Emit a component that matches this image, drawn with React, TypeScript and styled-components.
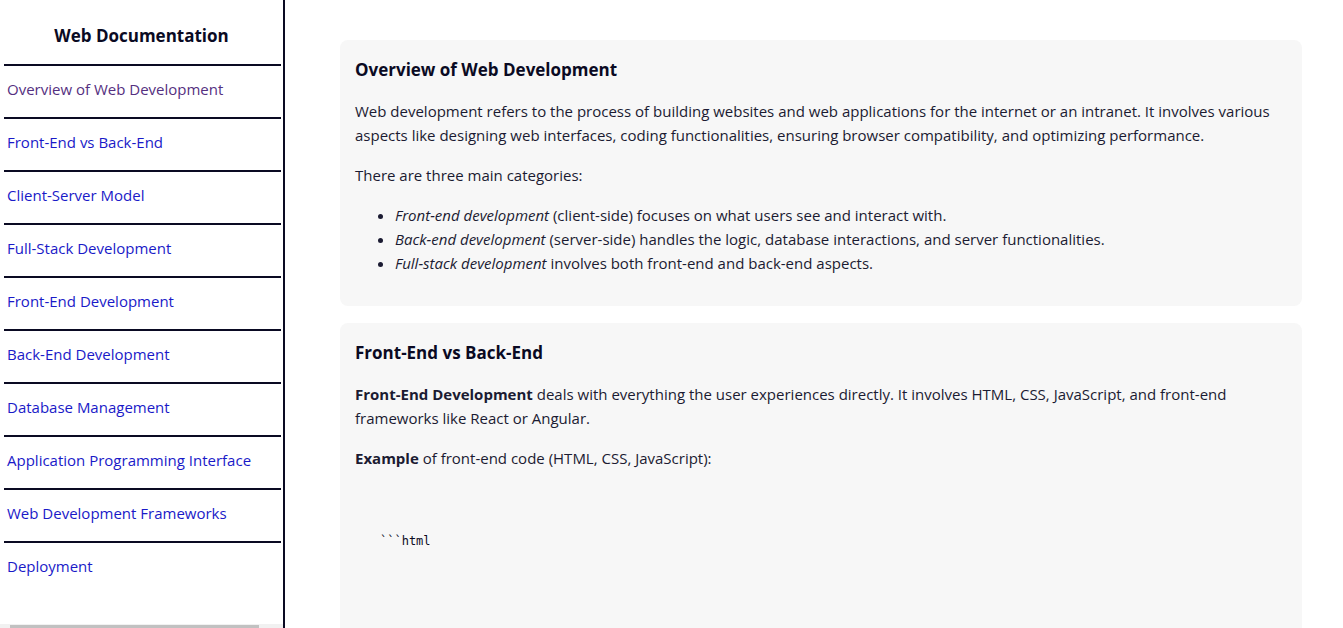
import React from "react";
import styled, { createGlobalStyle } from "styled-components";

const Global = createGlobalStyle`
  html, body { margin: 0; padding: 0; background: #ffffff; }
  body { font-family: "Open Sans", "Noto Sans", sans-serif; color: #0a0a23; }
  * { box-sizing: border-box; }
`;

const Page = styled.div`
  display: flex;
  height: 628px;
  overflow: hidden;
`;

const Sidebar = styled.nav`
  width: 285px;
  flex: 0 0 285px;
  border-right: 2px solid #0a0a23;
  height: 628px;
  display: flex;
  flex-direction: column;
  overflow: hidden;
`;

const SideTitle = styled.header`
  font-size: 17px;
  font-weight: 700;
  text-align: center;
  padding: 24px 0 16px;
  line-height: 24px;
  color: #0a0a23;
`;

const NavList = styled.ul`
  list-style: none;
  margin: 0;
  padding: 0 2px 0 4px;
  flex: 1;
`;

const NavItem = styled.li`
  border-top: 2px solid #0a0a23;
  height: 53px;
  display: flex;
  align-items: center;
`;

const NavLink = styled.a<{ $visited?: boolean }>`
  font-size: 15px;
  color: ${(p) => (p.$visited ? "#55307f" : "#1a1ac8")};
  text-decoration: none;
  padding-left: 3px;
  margin-top: -6px;
`;

const ScrollTrack = styled.div`
  height: 4px;
  flex: 0 0 4px;
  background: #f1f1f1;
  padding: 1px 24px 0 10px;
`;

const ScrollThumb = styled.div`
  height: 3px;
  background: #c1c1c1;
`;

const Main = styled.main`
  flex: 1;
  padding: 40px 41px 0 55px;
  display: flex;
  flex-direction: column;
  gap: 17px;
`;

const Card = styled.section`
  background: #f7f7f7;
  border-radius: 8px;
  padding: 18px 15px 15px;
`;

const CardTitle = styled.header`
  font-size: 17px;
  font-weight: 700;
  line-height: 24px;
  margin-bottom: 17px;
`;

const P = styled.p`
  font-size: 15px;
  line-height: 24px;
  margin: 0 0 16px;
  color: #1b1b32;
`;

const List = styled.ul`
  margin: 0 0 16px;
  padding-left: 40px;
  font-size: 15px;
  line-height: 24px;
  color: #1b1b32;
`;

const Code = styled.pre`
  font-family: "DejaVu Sans Mono", "Liberation Mono", monospace;
  font-size: 12px;
  line-height: 16px;
  margin: 0;
  padding: 47px 0 80px 25px;
  color: #0a0a23;
`;

const links = [
  "Overview of Web Development",
  "Front-End vs Back-End",
  "Client-Server Model",
  "Full-Stack Development",
  "Front-End Development",
  "Back-End Development",
  "Database Management",
  "Application Programming Interface",
  "Web Development Frameworks",
  "Deployment",
];

export default function App() {
  return (
    <>
      <Global />
      <Page>
        <Sidebar>
          <SideTitle>Web Documentation</SideTitle>
          <NavList>
            {links.map((l, i) => (
              <NavItem key={l}>
                <NavLink href="#" $visited={i === 0}>
                  {l}
                </NavLink>
              </NavItem>
            ))}
          </NavList>
          <ScrollTrack>
            <ScrollThumb />
          </ScrollTrack>
        </Sidebar>
        <Main>
          <Card>
            <CardTitle>Overview of Web Development</CardTitle>
            <P>
              Web development refers to the process of building websites and web applications for the
              internet or an intranet. It involves various aspects like designing web interfaces, coding
              functionalities, ensuring browser compatibility, and optimizing performance.
            </P>
            <P>There are three main categories:</P>
            <List>
              <li>
                <em>Front-end development</em> (client-side) focuses on what users see and interact with.
              </li>
              <li>
                <em>Back-end development</em> (server-side) handles the logic, database interactions, and
                server functionalities.
              </li>
              <li>
                <em>Full-stack development</em> involves both front-end and back-end aspects.
              </li>
            </List>
          </Card>
          <Card>
            <CardTitle>Front-End vs Back-End</CardTitle>
            <P>
              <strong>Front-End Development</strong> deals with everything the user experiences directly. It
              involves HTML, CSS, JavaScript, and front-end frameworks like React or Angular.
            </P>
            <P>
              <strong>Example</strong> of front-end code (HTML, CSS, JavaScript):
            </P>
            <Code>```html</Code>
          </Card>
        </Main>
      </Page>
    </>
  );
}
